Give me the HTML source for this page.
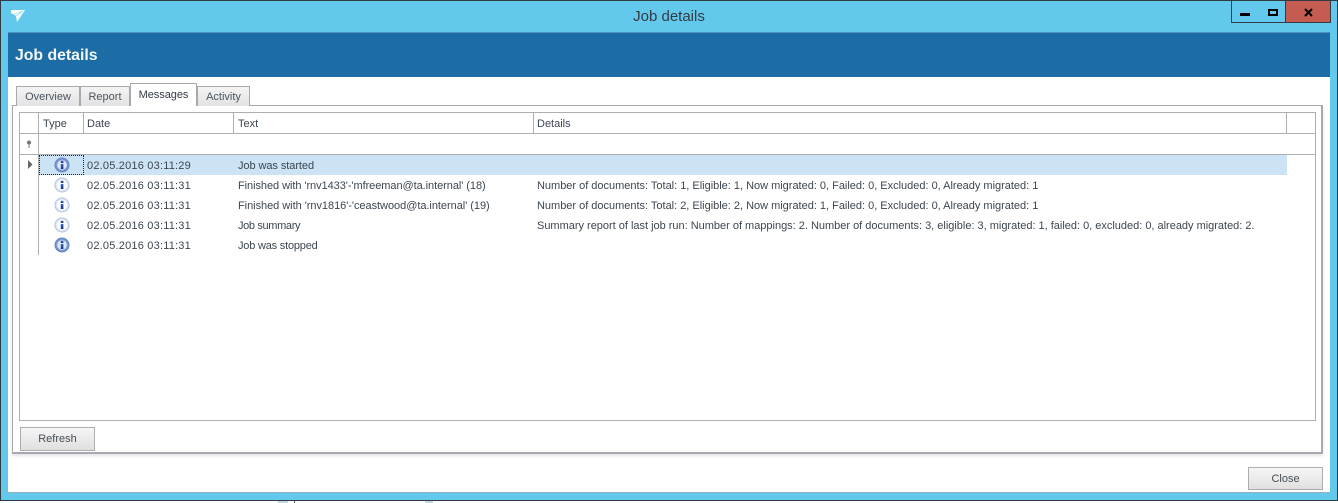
<!DOCTYPE html>
<html><head><meta charset="utf-8">
<style>
html,body{margin:0;padding:0;background:#fff}
#w{position:relative;width:1338px;height:503px;overflow:hidden;background:#fff;font:11px "Liberation Sans",sans-serif;color:#3c4650}
#w div{position:absolute;box-sizing:border-box}
.t{white-space:nowrap;line-height:14px;height:14px}
.l{background:#aeaeb2}
.tab{background:linear-gradient(#f4f4f4,#e2e2e2);border:1px solid #a8a8ae;border-bottom:none;text-align:center;line-height:20px;color:#4a5560}
.btn{background:linear-gradient(#f6f6f6,#e0e0e0);border:1px solid #adadad;text-align:center;line-height:23px;color:#444c54}
svg{position:absolute;display:block}
</style></head><body>
<div id="w">
<svg width="0" height="0" style="left:0;top:0"><defs>
<radialGradient id="a" cx=".5" cy=".5" r=".5"><stop offset=".55" stop-color="#dfe8f6"/><stop offset=".72" stop-color="#7d9ad6"/><stop offset="1" stop-color="#5f7fbe"/></radialGradient>
<radialGradient id="b" cx=".5" cy=".5" r=".5"><stop offset=".62" stop-color="#fbfcfe"/><stop offset=".8" stop-color="#dbe4f3"/><stop offset="1" stop-color="#a3b5d8"/></radialGradient>
<linearGradient id="i" x1="0" y1="0" x2="0" y2="1"><stop offset="0" stop-color="#3f62b8"/><stop offset="1" stop-color="#14308a"/></linearGradient>
</defs></svg>
<div style="left:0;top:0;width:1338px;height:501px;background:#63c9ec;border:1px solid #2f3a42"></div>
<div style="left:278px;top:501px;width:10px;height:2px;background:#c4d8e2"></div>
<div style="left:294px;top:501px;width:1px;height:2px;background:#555"></div>
<div style="left:425px;top:501px;width:8px;height:2px;background:#c4d8e2"></div>
<svg style="left:10px;top:9px" width="16" height="14" viewBox="0 0 16 14"><path d="M1 1L15 1L7 13L6 7L1 4Z" fill="#fff"/><path d="M3.500 5.500L13 2M6 7L13 2" stroke="#9fdff3" stroke-width=".8" fill="none"/></svg>
<div class="t" style="left:0;width:1338px;top:9px;height:16px;line-height:16px;text-align:center;font-size:15px;color:#333b42">Job details</div>
<!-- window controls -->
<div style="left:1231px;top:1px;width:29px;height:22px;border:1px solid #333c44;border-top:none;background:#63c9ec"></div>
<div style="left:1259px;top:1px;width:27px;height:22px;border:1px solid #333c44;border-top:none;border-left:none;background:#63c9ec"></div>
<div style="left:1285px;top:1px;width:46px;height:22px;border:1px solid #333c44;border-top:none;background:#c45c52"></div>
<div style="left:1240px;top:13px;width:10px;height:3px;background:#000"></div>
<div style="left:1268px;top:9px;width:10px;height:7px;border:2px solid #000"></div>
<svg style="left:1304px;top:8px" width="9" height="9" viewBox="0 0 9 9"><path d="M1 1L8 8M8 1L1 8" stroke="#000" stroke-width="2"/></svg>
<!-- content -->
<div style="left:8px;top:32px;width:1322px;height:461px;background:#fff;border-bottom:1px solid #8fb0c0"></div>
<div style="left:8px;top:32px;width:1322px;height:45px;background:#1c6ca5;border-top:1px solid #4f90b8"></div>
<div class="t" style="left:15px;top:47px;height:18px;line-height:18px;font-size:15.800px;font-weight:bold;color:#f4f8fb">Job details</div>
<!-- panel -->
<div style="left:12px;top:105px;width:1311px;height:349px;background:#fff;border:1px solid #a8a8ae;border-bottom:2px solid #a8a8b4;border-right-width:2px;box-shadow:0 2px 3px #e4e4e4"></div>
<div class="tab" style="left:16px;top:86px;width:64px;height:20px">Overview</div>
<div class="tab" style="left:80px;top:86px;width:50px;height:20px">Report</div>
<div class="tab" style="left:197px;top:86px;width:53px;height:20px">Activity</div>
<div class="tab" style="left:130px;top:83px;width:67px;height:23px;background:#fff;line-height:23px;color:#333b44;letter-spacing:-.05px">Messages</div>
<!-- grid -->
<div style="left:19px;top:112px;width:1297px;height:309px;border:1px solid #aeaeb2"></div>
<div class="l" style="left:20px;top:133px;width:1295px;height:1px"></div>
<div class="l" style="left:20px;top:154px;width:1295px;height:1px"></div>
<div class="l" style="left:38px;top:113px;width:1px;height:142px"></div>
<div class="l" style="left:83px;top:113px;width:1px;height:20px"></div>
<div class="l" style="left:233px;top:113px;width:1px;height:20px"></div>
<div class="l" style="left:533px;top:113px;width:1px;height:20px"></div>
<div class="l" style="left:1286px;top:113px;width:1px;height:20px"></div>
<div class="t" style="left:43px;top:117px">Type</div>
<div class="t" style="left:87px;top:117px">Date</div>
<div class="t" style="left:238px;top:117px">Text</div>
<div class="t" style="left:537px;top:117px">Details</div>
<svg style="left:26px;top:140px" width="6" height="8" viewBox="0 0 6 8"><circle cx="3" cy="2.500" r="2" fill="#777"/><path d="M3 4V8" stroke="#777"/></svg>
<!-- selected row -->
<div style="left:39px;top:155px;width:1248px;height:20px;background:#cbe3f5"></div>
<div style="left:39px;top:155px;width:45px;height:20px;border:1px dotted #222"></div>
<svg style="left:27px;top:160px" width="6" height="9" viewBox="0 0 6 9"><path d="M1 0L5.500 4.500L1 9Z" fill="#666"/></svg>
<!-- icons -->
<svg style="left:54px;top:157px" width="16" height="16" viewBox="0 0 16 16"><circle cx="8" cy="8" r="7.500" fill="url(#a)"/><rect x="6.800" y="7" width="2.600" height="5" fill="url(#i)"/><rect x="6.800" y="3.800" width="2.600" height="2.200" fill="url(#i)"/></svg>
<svg style="left:54px;top:177px" width="16" height="16" viewBox="0 0 16 16"><circle cx="8" cy="8" r="7.500" fill="url(#b)"/><rect x="6.800" y="7" width="2.600" height="5" fill="url(#i)"/><rect x="6.800" y="3.800" width="2.600" height="2.200" fill="url(#i)"/></svg>
<svg style="left:54px;top:197px" width="16" height="16" viewBox="0 0 16 16"><circle cx="8" cy="8" r="7.500" fill="url(#b)"/><rect x="6.800" y="7" width="2.600" height="5" fill="url(#i)"/><rect x="6.800" y="3.800" width="2.600" height="2.200" fill="url(#i)"/></svg>
<svg style="left:54px;top:217px" width="16" height="16" viewBox="0 0 16 16"><circle cx="8" cy="8" r="7.500" fill="url(#b)"/><rect x="6.800" y="7" width="2.600" height="5" fill="url(#i)"/><rect x="6.800" y="3.800" width="2.600" height="2.200" fill="url(#i)"/></svg>
<svg style="left:54px;top:237px" width="16" height="16" viewBox="0 0 16 16"><circle cx="8" cy="8" r="7.500" fill="url(#a)"/><rect x="6.800" y="7" width="2.600" height="5" fill="url(#i)"/><rect x="6.800" y="3.800" width="2.600" height="2.200" fill="url(#i)"/></svg>
<!-- rows -->
<div class="t" style="left:87px;top:159px;letter-spacing:.2px">02.05.2016 03:11:29</div>
<div class="t" style="left:87px;top:179px;letter-spacing:.2px">02.05.2016 03:11:31</div>
<div class="t" style="left:87px;top:199px;letter-spacing:.2px">02.05.2016 03:11:31</div>
<div class="t" style="left:87px;top:219px;letter-spacing:.2px">02.05.2016 03:11:31</div>
<div class="t" style="left:87px;top:239px;letter-spacing:.2px">02.05.2016 03:11:31</div>
<div class="t" style="left:238px;top:159px;letter-spacing:-.07px">Job was started</div>
<div class="t" style="left:238px;top:179px;letter-spacing:-.06px">Finished with 'rnv1433'-'mfreeman@ta.internal' (18)</div>
<div class="t" style="left:238px;top:199px;letter-spacing:-.04px">Finished with 'rnv1816'-'ceastwood@ta.internal' (19)</div>
<div class="t" style="left:238px;top:219px;letter-spacing:-.35px">Job summary</div>
<div class="t" style="left:238px;top:239px;letter-spacing:-.2px">Job was stopped</div>
<div class="t" style="left:537px;top:179px;letter-spacing:-.01px">Number of documents: Total: 1, Eligible: 1, Now migrated: 0, Failed: 0, Excluded: 0, Already migrated: 1</div>
<div class="t" style="left:537px;top:199px;letter-spacing:-.01px">Number of documents: Total: 2, Eligible: 2, Now migrated: 1, Failed: 0, Excluded: 0, Already migrated: 1</div>
<div class="t" style="left:537px;top:219px;letter-spacing:-.01px">Summary report of last job run: Number of mappings: 2. Number of documents: 3, eligible: 3, migrated: 1, failed: 0, excluded: 0, already migrated: 2.</div>
<div class="btn" style="left:20px;top:427px;width:75px;height:24px">Refresh</div>
<div class="btn" style="left:1248px;top:467px;width:75px;height:23px;line-height:23px">Close</div>
</div>
</body></html>
